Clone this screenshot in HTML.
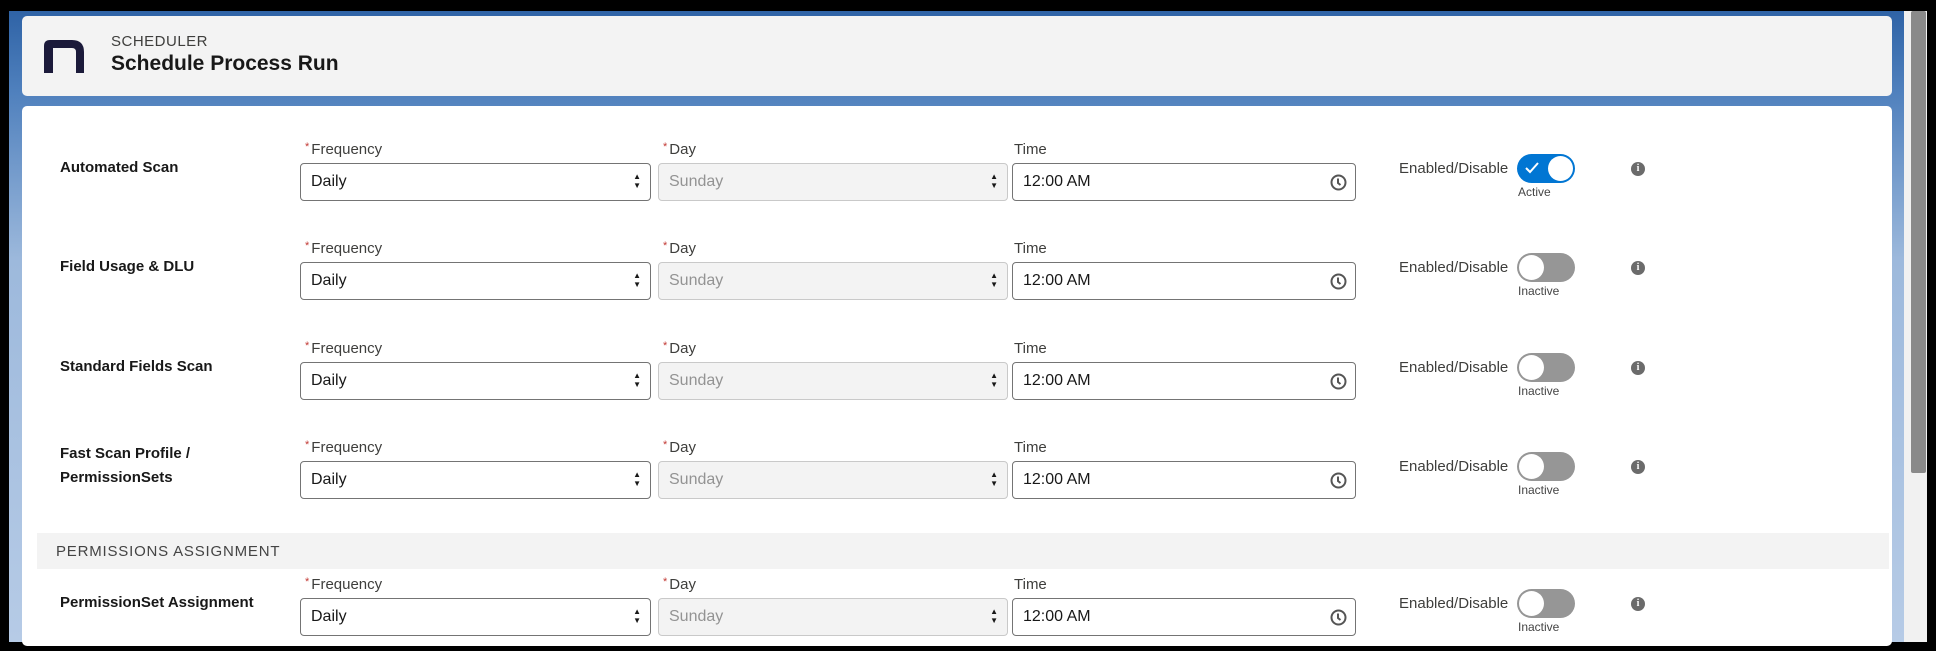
<!DOCTYPE html>
<html><head><meta charset="utf-8"><style>
*{box-sizing:border-box;margin:0;padding:0}
body{width:1936px;height:651px;background:#000;position:relative;overflow:hidden;font-family:"Liberation Sans",sans-serif;color:#181818}
.bg{position:absolute;left:9px;top:11px;width:1895px;height:631px;background:linear-gradient(180deg,#2f63a6 0px,#4f80bd 80px,#9db9dc 250px,#b6cbe6 631px)}
.sb{position:absolute;left:1904px;top:11px;width:23px;height:631px;background:#f1f1f1}
.sbt{position:absolute;left:1911px;top:11px;width:15px;height:462px;background:#8a8a8a;border-radius:2px}
.hdr{position:absolute;left:22px;top:16px;width:1870px;height:80px;background:#f3f3f3;border-radius:5px}
.main{position:absolute;left:22px;top:106px;width:1870px;height:540px;background:#fff;border-radius:5px}
.abs{position:absolute}
.lbl{font-size:15px;color:#3e3e3c}
.req{color:#c23934;font-size:11px;vertical-align:top;margin-right:2px}
.box{position:absolute;height:38px;border:1px solid #747474;border-radius:4px;font-size:16px;padding:0 10px;line-height:36px;background:#fff}
.dis{background:#f3f3f3;border-color:#c9c9c9;color:#939393}
.arr{position:absolute;right:9px;top:8px;font-size:8px;line-height:9px;color:#181818}
.name{position:absolute;left:60px;font-size:15px;font-weight:bold;width:200px;line-height:24px}
.tg{position:absolute;left:1517px;width:58px;height:29px;border-radius:15px;background:#969696}
.tg .k{position:absolute;left:2px;top:2px;width:25px;height:25px;border-radius:50%;background:#fff}
.tg.on{background:#0176d3}
.tg.on .k{left:31px}
.info{position:absolute;left:1631px;width:14px;height:14px;border-radius:50%;background:#6b6b6b;color:#fff;font-size:10px;font-weight:bold;text-align:center;line-height:14px;font-family:"Liberation Serif",serif}
</style></head><body>
<div class="bg"></div>
<div class="sb"></div><div class="sbt"></div>
<div class="hdr">
 <svg class="abs" style="left:22px;top:24px" width="40" height="33" viewBox="0 0 40 33"><path d="M0 33V6Q0 0 6 0H28Q40 0 40 12V33H32V12Q32 8 28 8H9V33Z" fill="#1b1a3a"/></svg>
 <div class="abs" style="left:89px;top:17px;font-size:15px;color:#3e3e3c;letter-spacing:.5px">SCHEDULER</div>
 <div class="abs" style="left:89px;top:36px;font-size:21px;font-weight:bold;color:#181818">Schedule Process Run</div>
</div>
<div class="main"></div>

<div id="rows"></div>
<div class="abs" style="left:37px;top:533px;width:1852px;height:36px;background:#f3f3f3"></div>
<div class="abs" style="left:56px;top:543px;font-size:15px;color:#444;letter-spacing:.8px">PERMISSIONS ASSIGNMENT</div>

<script>
var rows=[[0,"Automated Scan",1],[99,"Field Usage &amp; DLU",0],[199,"Standard Fields Scan",0],[298,"Fast Scan Profile /<br>PermissionSets",0],[435,"PermissionSet Assignment",0]];
var h="";
rows.forEach(function(r){var y=r[0];
h+='<div class="name" style="top:'+(y+(r[1].indexOf("<br>")>0?144:156))+'px">'+r[1]+'</div>';
h+='<div class="abs lbl" style="left:305px;top:'+(y+141)+'px"><span class="req">*</span>Frequency</div>';
h+='<div class="box" style="left:300px;top:'+(y+163)+'px;width:351px">Daily<div class="arr">▲<br>▼</div></div>';
h+='<div class="abs lbl" style="left:663px;top:'+(y+141)+'px"><span class="req">*</span>Day</div>';
h+='<div class="box dis" style="left:658px;top:'+(y+163)+'px;width:350px">Sunday<div class="arr">▲<br>▼</div></div>';
h+='<div class="abs lbl" style="left:1014px;top:'+(y+141)+'px">Time</div>';
h+='<div class="box" style="left:1012px;top:'+(y+163)+'px;width:344px">12:00 AM<svg style="position:absolute;right:8px;top:10px" width="17" height="17" viewBox="0 0 17 17"><circle cx="8.5" cy="8.5" r="7" fill="none" stroke="#555" stroke-width="2"/><path d="M8 4.5V9L10.5 11" fill="none" stroke="#555" stroke-width="2"/></svg></div>';
h+='<div class="abs lbl" style="left:1399px;top:'+(y+160)+'px;color:#3e3e3c">Enabled/Disable</div>';
h+='<div class="tg'+(r[2]?' on':'')+'" style="top:'+(y+154)+'px"><div class="k"></div>'+(r[2]?'<svg style="position:absolute;left:8px;top:8px" width="14" height="12" viewBox="0 0 14 12"><path d="M1 6L5 10L13 1" fill="none" stroke="#fff" stroke-width="2"/></svg>':'')+'</div>';
h+='<div class="abs" style="left:1518px;top:'+(y+185)+'px;font-size:12px;color:#444">'+(r[2]?'Active':'Inactive')+'</div>';
h+='<div class="info" style="top:'+(y+162)+'px">i</div>';
});
document.getElementById("rows").innerHTML=h;
</script>
</body></html>
